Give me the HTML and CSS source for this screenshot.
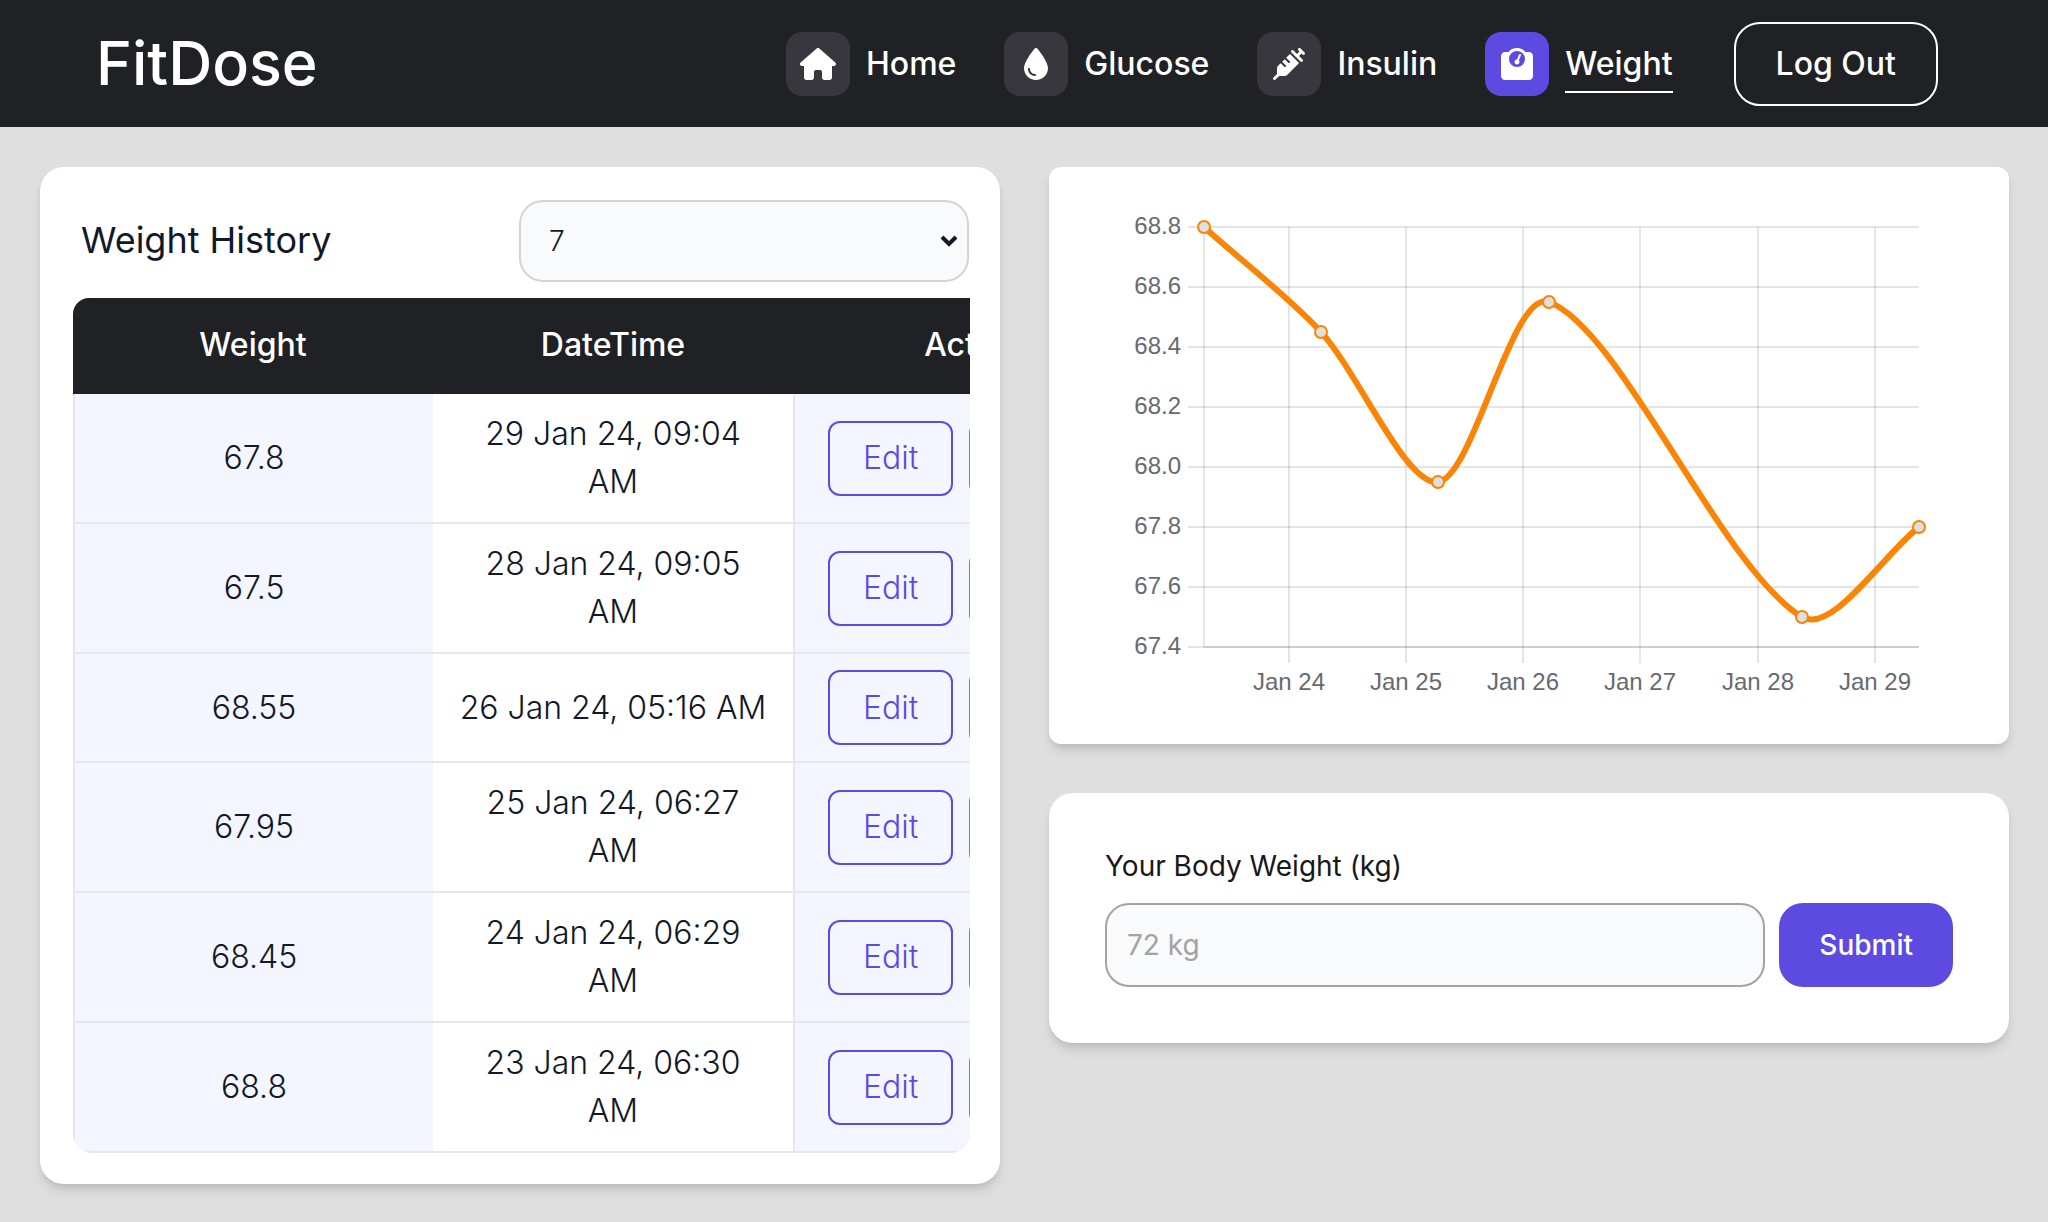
FILE: index.html
```html
<!DOCTYPE html>
<html lang="en">
<head>
<meta charset="utf-8">
<meta name="viewport" content="width=device-width, initial-scale=1">
<title>FitDose</title>
<link rel="stylesheet" href="styles.css">
</head>
<body>
<header class="topbar">
  <a class="logo" href="#">FitDose</a>
  <nav class="nav" aria-label="Main">
    <a class="nav-link" href="#">
      <span class="nav-icon"><svg viewBox="0 0 576 512" width="36" height="32"><path d="M575.8 255.500C575.8 273.500 560.8 287.600 543.8 287.600H511.800L512.500 447.700C512.500 450.500 512.300 453.100 512 455.800V472C512 494.100 494.100 512 472 512H456C454.900 512 453.800 511.900 452.700 511.900C451.300 511.900 449.900 512 448.500 512H392C369.900 512 352 494.100 352 472V384C352 366.300 337.700 352 320 352H256C238.300 352 224 366.300 224 384V472C224 494.100 206.100 512 184 512H128.100C126.600 512 125.100 511.900 123.600 511.800C122.400 511.900 121.200 512 120 512H104C81.900 512 64 494.100 64 472V360C64 359.100 64 358.100 64.100 357.200V287.600H32C14 287.600 0 273.500 0 255.500C0 246.500 3 238.500 10 231.500L266.400 8C273.400 1 281.400 0 288.400 0C295.400 0 303.400 2 309.400 7L564.800 231.500C572.800 238.500 576.800 246.500 575.800 255.500Z"/></svg></span>
      <span class="nav-text">Home</span>
    </a>
    <a class="nav-link" href="#">
      <span class="nav-icon"><svg viewBox="0 0 384 512" width="24" height="32"><path d="M192 512C86 512 0 426 0 320C0 228.800 130.200 57.700 166.600 11.700C172.600 4.200 181.500 0 191.100 0H192.900C202.500 0 211.400 4.200 217.400 11.700C253.800 57.700 384 228.800 384 320C384 426 298 512 192 512ZM96 336C96 327.200 88.800 320 80 320S64 327.200 64 336C64 397.900 114.100 448 176 448C184.800 448 192 440.800 192 432S184.800 416 176 416C131.800 416 96 380.200 96 336Z"/></svg></span>
      <span class="nav-text">Glucose</span>
    </a>
    <a class="nav-link" href="#">
      <span class="nav-icon"><svg viewBox="0 0 512 512" width="32" height="32"><path d="M441 7l32 32 32 32c9.400 9.400 9.400 24.600 0 33.900s-24.600 9.400-33.900 0l-15-15L417.900 128l55 55c9.400 9.400 9.400 24.600 0 33.900s-24.600 9.400-33.900 0l-72-72L295 73c-9.400-9.400-9.400-24.600 0-33.900s24.600-9.400 33.900 0l55 55L422.100 56 407 41c-9.400-9.400-9.400-24.600 0-33.900s24.600-9.400 33.900 0zM210.300 155.700l61.100-61.100c.3 .3 .6 .7 1 1l16 16 56 56 56 56 16 16c.3 .3 .6 .6 1 1l-191 191c-10.500 10.500-24.700 16.400-39.600 16.400H97.900L41 505c-9.400 9.400-24.600 9.400-33.900 0s-9.400-24.600 0-33.900l57-57V325.300c0-14.900 5.900-29.100 16.400-39.600l43.300-43.300 57 57c6.200 6.200 16.400 6.200 22.600 0s6.200-16.400 0-22.600l-57-57 41.400-41.400 57 57c6.200 6.200 16.400 6.200 22.600 0s6.200-16.400 0-22.600l-57-57z"/></svg></span>
      <span class="nav-text">Insulin</span>
    </a>
    <a class="nav-link nav-link-active" href="#" aria-current="page">
      <span class="nav-icon"><svg viewBox="0 0 512 512" width="32" height="32"><path d="M128 176a128 128 0 1 1 256 0 128 128 0 1 1 -256 0zM391.800 64C359.500 24.900 310.700 0 256 0S152.500 24.900 120.200 64H64C28.700 64 0 92.700 0 128V448c0 35.300 28.700 64 64 64H448c35.300 0 64-28.700 64-64V128c0-35.300-28.700-64-64-64H391.800zM296 224c0-10.600-4.100-20.200-10.900-27.400l33.600-78.300c3.500-8.100-.3-17.500-8.400-21s-17.500 .3-21 8.400L255.700 184c-22 .1-39.700 18-39.700 40c0 22.100 17.900 40 40 40s40-17.900 40-40z"/></svg></span>
      <span class="nav-text">Weight</span>
    </a>
    <button class="logout" type="button">Log Out</button>
  </nav>
</header>

<main class="layout">
  <section class="card history">
    <div class="history-head">
      <label class="history-title" for="count">Weight History</label>
      <div class="select-wrap">
        <select class="select" id="count">
          <option selected>7</option>
          <option>14</option>
          <option>30</option>
        </select>
        <svg class="select-arrow" viewBox="0 0 18 12" width="18" height="12" aria-hidden="true"><path d="M2 2l7 7 7-7"/></svg>
      </div>
    </div>
    <div class="table-wrap">
      <table class="table">
        <thead>
          <tr><th class="col-data" scope="col">Weight</th><th class="col-data" scope="col">DateTime</th><th class="col-actions" scope="col">Actions</th></tr>
        </thead>
        <tbody>
          <tr><td>67.8</td><td>29 Jan 24, 09:04 AM</td><td><div class="actions"><button class="btn" type="button">Edit</button><button class="btn btn-delete" type="button">Delete</button></div></td></tr>
          <tr><td>67.5</td><td>28 Jan 24, 09:05 AM</td><td><div class="actions"><button class="btn" type="button">Edit</button><button class="btn btn-delete" type="button">Delete</button></div></td></tr>
          <tr><td>68.55</td><td>26 Jan 24, 05:16 AM</td><td><div class="actions"><button class="btn" type="button">Edit</button><button class="btn btn-delete" type="button">Delete</button></div></td></tr>
          <tr><td>67.95</td><td>25 Jan 24, 06:27 AM</td><td><div class="actions"><button class="btn" type="button">Edit</button><button class="btn btn-delete" type="button">Delete</button></div></td></tr>
          <tr><td>68.45</td><td>24 Jan 24, 06:29 AM</td><td><div class="actions"><button class="btn" type="button">Edit</button><button class="btn btn-delete" type="button">Delete</button></div></td></tr>
          <tr><td>68.8</td><td>23 Jan 24, 06:30 AM</td><td><div class="actions"><button class="btn" type="button">Edit</button><button class="btn btn-delete" type="button">Delete</button></div></td></tr>
        </tbody>
      </table>
    </div>
  </section>

  <div class="side">
    <section class="card chart-card">
      <svg class="chart" viewBox="0 0 960 577" role="img" aria-label="Weight over time">
        <g class="grid">
          <path d="M139 60H870M139 120H870M139 180H870M139 240H870M139 300H870M139 360H870M139 420H870M139 480H870"/>
          <path d="M155 60V480M240 60V496M357 60V496M474 60V496M591 60V496M709 60V496M826 60V496"/>
          <path d="M155 480H870"/>
        </g>
        <g class="tick tick-y">
          <text x="132" y="67">68.8</text>
          <text x="132" y="127">68.6</text>
          <text x="132" y="187">68.4</text>
          <text x="132" y="247">68.2</text>
          <text x="132" y="307">68.0</text>
          <text x="132" y="367">67.8</text>
          <text x="132" y="427">67.6</text>
          <text x="132" y="487">67.4</text>
        </g>
        <g class="tick tick-x">
          <text x="240" y="523">Jan 24</text>
          <text x="357" y="523">Jan 25</text>
          <text x="474" y="523">Jan 26</text>
          <text x="591" y="523">Jan 27</text>
          <text x="709" y="523">Jan 28</text>
          <text x="826" y="523">Jan 29</text>
        </g>
        <path class="line" d="M155 60C190 92 240 130 272 165C310 207 357 319 389 315C425 310 463 121 500 135C572 162 672 401 753 450C783 468 835 387 870 360"/>
        <g class="points">
          <circle cx="155" cy="60" r="6"/>
          <circle cx="272" cy="165" r="6"/>
          <circle cx="389" cy="315" r="6"/>
          <circle cx="500" cy="135" r="6"/>
          <circle cx="753" cy="450" r="6"/>
          <circle cx="870" cy="360" r="6"/>
        </g>
      </svg>
    </section>

    <form class="card entry">
      <label class="entry-label" for="weight">Your Body Weight (kg)</label>
      <div class="entry-row">
        <input class="entry-input" id="weight" type="text" inputmode="decimal" placeholder="72 kg">
        <button class="submit" type="button">Submit</button>
      </div>
    </form>
  </div>
</main>
</body>
</html>
```
FILE: styles.css
```css
*, *::before, *::after { box-sizing: border-box; }

body {
  margin: 0;
  min-height: 100vh;
  background: #dfdfdf;
  color: #111827;
  font-family: Inter, "Liberation Sans", sans-serif;
  font-optical-sizing: none;
}

button, input, select { font: inherit; color: inherit; margin: 0; }
button { cursor: pointer; }

/* Top bar */
.topbar {
  display: flex;
  align-items: center;
  justify-content: space-between;
  height: 127px;
  padding: 0 110px 0 96px;
  background: #202125;
  color: #fff;
}
.logo { padding-bottom: 2px; font-size: 61px; font-weight: 500; line-height: 72px; color: inherit; text-decoration: none; }
.nav { display: flex; align-items: center; gap: 48px; font-size: 32px; font-weight: 500; }
.nav-link { display: flex; align-items: center; gap: 16px; color: inherit; text-decoration: none; }
.nav-icon {
  display: flex;
  align-items: center;
  justify-content: center;
  width: 64px;
  height: 64px;
  border-radius: 16px;
  background: #38373d;
}
.nav-icon svg { fill: currentColor; }
.nav-text { padding: 4px 0 2px; line-height: 50px; border-bottom: 2px solid transparent; }
.nav-link-active .nav-icon { background: #5d4ae1; }
.nav-link-active .nav-text { border-color: #fff; }
.logout {
  height: 84px;
  margin-left: 13px;
  padding: 0 40px;
  border: 2px solid #fff;
  border-radius: 26px;
  background: none;
}

/* Page grid */
.layout {
  display: grid;
  grid-template-columns: minmax(0, 1fr) minmax(0, 1fr);
  align-items: start;
  gap: 49px;
  padding: 40px 39px 40px 40px;
}
.side { display: grid; gap: 49px; }
.card {
  background: #fff;
  border-radius: 24px;
  box-shadow: 0 8px 12px -2px rgba(0, 0, 0, .12), 0 4px 8px -4px rgba(0, 0, 0, .12);
}

/* History */
.history { padding: 33px 30px 31px 33px; }
.history-head {
  display: grid;
  grid-template-columns: calc(50% - 2px) 1fr;
  align-items: center;
  margin: 0 1px 16px 0;
}
.history-title { padding: 0 0 2px 8px; font-size: 36px; line-height: 48px; }
.select-wrap { position: relative; }
.select {
  display: block;
  width: 100%;
  height: 82px;
  padding: 0 28px;
  border: 2px solid #d4d4d4;
  border-radius: 24px;
  background: #f9fafb;
  font-size: 28px;
  font-weight: 300;
  appearance: none;
}
.select-arrow {
  position: absolute;
  top: 35px;
  right: 11px;
  fill: none;
  stroke: #111827;
  stroke-width: 4;
  pointer-events: none;
}
.table-wrap { overflow-x: auto; scrollbar-width: none; border-radius: 0 0 20px 20px; }
.table {
  width: 1098px;
  table-layout: fixed;
  border-collapse: separate;
  border-spacing: 0;
  text-align: center;
  font-size: 32px;
  font-weight: 300;
  line-height: 48px;
}
.col-data { width: 360px; }
.table th { height: 96px; padding: 0 0 2px; background: #202125; color: #fff; font-weight: 500; }
.table th:first-child { border-radius: 16px 0 0 0; }
.table td { padding: 16px 24px; border-bottom: 2px solid #e7e7e9; }
.table td:nth-child(odd) { background: #f3f6ff; border-left: 2px solid #e7e7e9; }
.table td:last-child { padding: 16px 33px; }
.actions { display: flex; gap: 16px; }
.btn {
  flex: none;
  height: 75px;
  padding: 0 33px;
  border: 2px solid #5d4ae1;
  border-radius: 12px;
  background: none;
  color: #5d4ae1;
}
.btn-delete { border-color: #d0604a; color: #d0604a; }

/* Chart */
.chart-card { border-radius: 12px; }
.chart { display: block; width: 100%; height: auto; }
.grid { fill: none; stroke: rgba(0, 0, 0, .1); stroke-width: 2; }
.tick { fill: #666a70; font-family: "Liberation Sans", Arial, sans-serif; font-size: 24px; }
.tick-y { text-anchor: end; }
.tick-x { text-anchor: middle; }
.line { fill: none; stroke: #fa8405; stroke-width: 6; stroke-linejoin: round; }
.points { fill: #dfdfdf; stroke: #fa8405; stroke-width: 2; }

/* New entry */
.entry { padding: 56px; }
.entry-label { display: block; margin-bottom: 19px; font-size: 28px; line-height: 35px; color: #18181b; }
.entry-row { display: flex; gap: 14px; }
.entry-input {
  flex: 1;
  min-width: 0;
  height: 84px;
  padding: 0 20px;
  border: 2px solid #a3a3a3;
  border-radius: 24px;
  background: #f9fafb;
  font-size: 28px;
}
.entry-input::placeholder { color: #a3a3a3; opacity: 1; }
.submit {
  height: 84px;
  padding: 0 40px;
  border: 0;
  border-radius: 24px;
  background: #5d4ae1;
  color: #fff;
  font-size: 28px;
  font-weight: 500;
}
```
